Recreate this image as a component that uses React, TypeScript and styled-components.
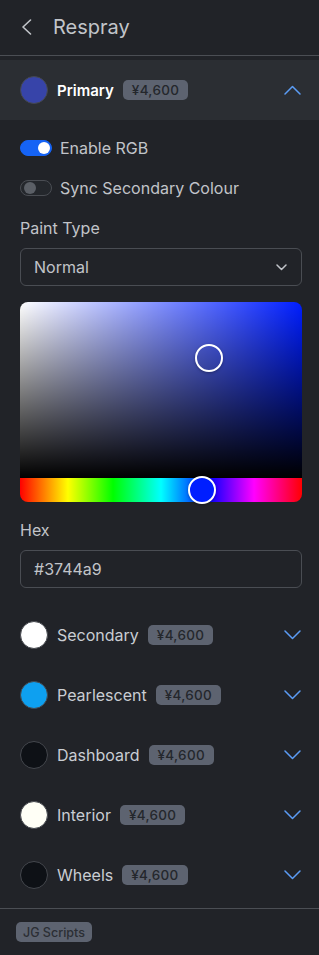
import React from "react";
import styled, { createGlobalStyle } from "styled-components";

const Global = createGlobalStyle`
  html, body { margin: 0; padding: 0; background: #212328; }
  body { font-family: Inter, "Noto Sans", sans-serif; -webkit-font-smoothing: antialiased; }
  * { box-sizing: border-box; }
`;

const Page = styled.div`
  width: 319px;
  height: 955px;
  background: #212328;
  display: flex;
  flex-direction: column;
  overflow: hidden;
`;

const Header = styled.div`
  height: 56px;
  display: flex;
  align-items: center;
  gap: 21px;
  padding: 0 0 2px 21px;
  border-bottom: 1px solid #4b4e54;
`;

const Title = styled.div`
  font-size: 20px;
  font-weight: 400;
  color: #c2c5ca;
`;

const List = styled.div`
  padding-top: 4px;
  display: flex;
  flex-direction: column;
  flex: 1;
`;

const Row = styled.div<{ $open?: boolean }>`
  height: 60px;
  display: flex;
  align-items: center;
  padding: 0 18px 0 20px;
  background: ${(p) => (p.$open ? "#2b2e33" : "transparent")};
`;

const Swatch = styled.div<{ $c: string }>`
  width: 28px;
  height: 28px;
  border-radius: 50%;
  background: ${(p) => p.$c};
  border: 1px solid #45484e;
  flex-shrink: 0;
`;

const RowLabel = styled.div<{ $open?: boolean }>`
  margin-left: 9px;
  font-size: ${(p) => (p.$open ? 15 : 16)}px;
  font-weight: ${(p) => (p.$open ? 600 : 400)};
  color: ${(p) => (p.$open ? "#ffffff" : "#c9cdd3")};
`;

const Badge = styled.div`
  margin-left: 9px;
  height: 20px;
  padding: 0 9px;
  border-radius: 5px;
  background: #5d6370;
  color: #24272c;
  font-size: 13.5px;
  font-weight: 500;
  display: flex;
  align-items: center;
  letter-spacing: 0.3px;
`;

const Spacer = styled.div`
  flex: 1;
`;

const Content = styled.div`
  padding: 18px 17px 17px 20px;
  display: flex;
  flex-direction: column;
`;

const ToggleRow = styled.div<{ $mt?: number }>`
  height: 20px;
  margin-top: ${(p) => p.$mt ?? 0}px;
  display: flex;
  align-items: center;
  gap: 8px;
  font-size: 16px;
  color: #c1c4c9;
`;

const Toggle = styled.div<{ $on?: boolean }>`
  width: 32px;
  height: 16px;
  border-radius: 8px;
  position: relative;
  flex-shrink: 0;
  background: ${(p) => (p.$on ? "#1563f5" : "#24272c")};
  border: 1px solid ${(p) => (p.$on ? "#1563f5" : "#4a4d53")};
  &::after {
    content: "";
    position: absolute;
    top: 1px;
    width: 12px;
    height: 12px;
    border-radius: 50%;
    left: ${(p) => (p.$on ? "17px" : "3px")};
    background: ${(p) => (p.$on ? "#ffffff" : "#5b5f66")};
  }
`;

const FieldLabel = styled.div<{ $mt: number }>`
  margin-top: ${(p) => p.$mt}px;
  height: 20px;
  display: flex;
  align-items: center;
  font-size: 16px;
  color: #c1c4c9;
`;

const Field = styled.div`
  margin-top: 10px;
  height: 38px;
  border: 1px solid #4a4d53;
  border-radius: 6px;
  display: flex;
  align-items: center;
  padding: 0 14px 0 13px;
  font-size: 16px;
  color: #c1c4c9;
`;

const Picker = styled.div`
  margin-top: 16px;
  height: 200px;
  display: flex;
  flex-direction: column;
`;

const Saturation = styled.div`
  flex: 1;
  position: relative;
  border-radius: 8px 8px 0 0;
  background: linear-gradient(to top, #000, rgba(0, 0, 0, 0)),
    linear-gradient(to right, #fff, rgba(255, 255, 255, 0)), #001eff;
`;

const Hue = styled.div`
  height: 24px;
  position: relative;
  border-radius: 0 0 8px 8px;
  background: linear-gradient(
    to right,
    #f00 0%,
    #ff0 17%,
    #0f0 33%,
    #0ff 50%,
    #00f 67%,
    #f0f 83%,
    #f00 100%
  );
`;

const Thumb = styled.div<{ $fill: string; $x: number; $y: number }>`
  position: absolute;
  left: ${(p) => p.$x}%;
  top: ${(p) => p.$y}%;
  width: 28px;
  height: 28px;
  border-radius: 50%;
  border: 2px solid #fff;
  background: ${(p) => p.$fill};
  transform: translate(-50%, -50%);
  box-shadow: 0 1px 3px rgba(0, 0, 0, 0.3);
`;

const Footer = styled.div`
  border-top: 1px solid #4b4e54;
  height: 47px;
  display: flex;
  align-items: center;
  padding: 0 0 0 16px;
`;

const FooterBadge = styled.div`
  height: 20px;
  padding: 0 7px;
  border-radius: 5px;
  background: #5d6370;
  color: #2b2e34;
  font-size: 12.5px;
  font-weight: 500;
  display: flex;
  align-items: center;
`;

const Chevron = ({ up }: { up?: boolean }) => (
  <svg width="17" height="10" viewBox="0 0 17 10" fill="none">
    <path
      d={up ? "M1 9 L8.5 1.5 L16 9" : "M1 1 L8.5 8.5 L16 1"}
      stroke="#5b9cf5"
      strokeWidth="1.5"
      strokeLinecap="round"
      strokeLinejoin="round"
    />
  </svg>
);

const items = [
  { name: "Secondary", color: "#ffffff" },
  { name: "Pearlescent", color: "#0ea0f0" },
  { name: "Dashboard", color: "#0e1116" },
  { name: "Interior", color: "#fffff6" },
  { name: "Wheels", color: "#0e1116" },
];

export default function App() {
  return (
    <Page>
      <Global />
      <Header>
        <svg width="11" height="16" viewBox="0 0 11 16" fill="none">
          <path d="M9.5 1 L2 8 L9.5 15" stroke="#c2c5ca" strokeWidth="1.6" strokeLinecap="round" strokeLinejoin="round" />
        </svg>
        <Title>Respray</Title>
      </Header>
      <List>
        <Row $open>
          <Swatch $c="#3744a9" />
          <RowLabel $open>Primary</RowLabel>
          <Badge>¥4,600</Badge>
          <Spacer />
          <Chevron up />
        </Row>
        <Content>
          <ToggleRow>
            <Toggle $on />
            Enable RGB
          </ToggleRow>
          <ToggleRow $mt={20}>
            <Toggle />
            Sync Secondary Colour
          </ToggleRow>
          <FieldLabel $mt={20}>Paint Type</FieldLabel>
          <Field>
            Normal
            <Spacer />
            <svg width="11" height="7" viewBox="0 0 11 7" fill="none">
              <path d="M1 1 L5.5 5.5 L10 1" stroke="#c1c4c9" strokeWidth="1.5" strokeLinecap="round" strokeLinejoin="round" />
            </svg>
          </Field>
          <Picker>
            <Saturation>
              <Thumb $fill="transparent" $x={67} $y={32} />
            </Saturation>
            <Hue>
              <Thumb $fill="#001eff" $x={64.7} $y={50} />
            </Hue>
          </Picker>
          <FieldLabel $mt={18}>Hex</FieldLabel>
          <Field>#3744a9</Field>
        </Content>
        {items.map((it) => (
          <Row key={it.name}>
            <Swatch $c={it.color} />
            <RowLabel>{it.name}</RowLabel>
            <Badge>¥4,600</Badge>
            <Spacer />
            <Chevron />
          </Row>
        ))}
        <Spacer />
      </List>
      <Footer>
        <FooterBadge>JG Scripts</FooterBadge>
      </Footer>
    </Page>
  );
}
